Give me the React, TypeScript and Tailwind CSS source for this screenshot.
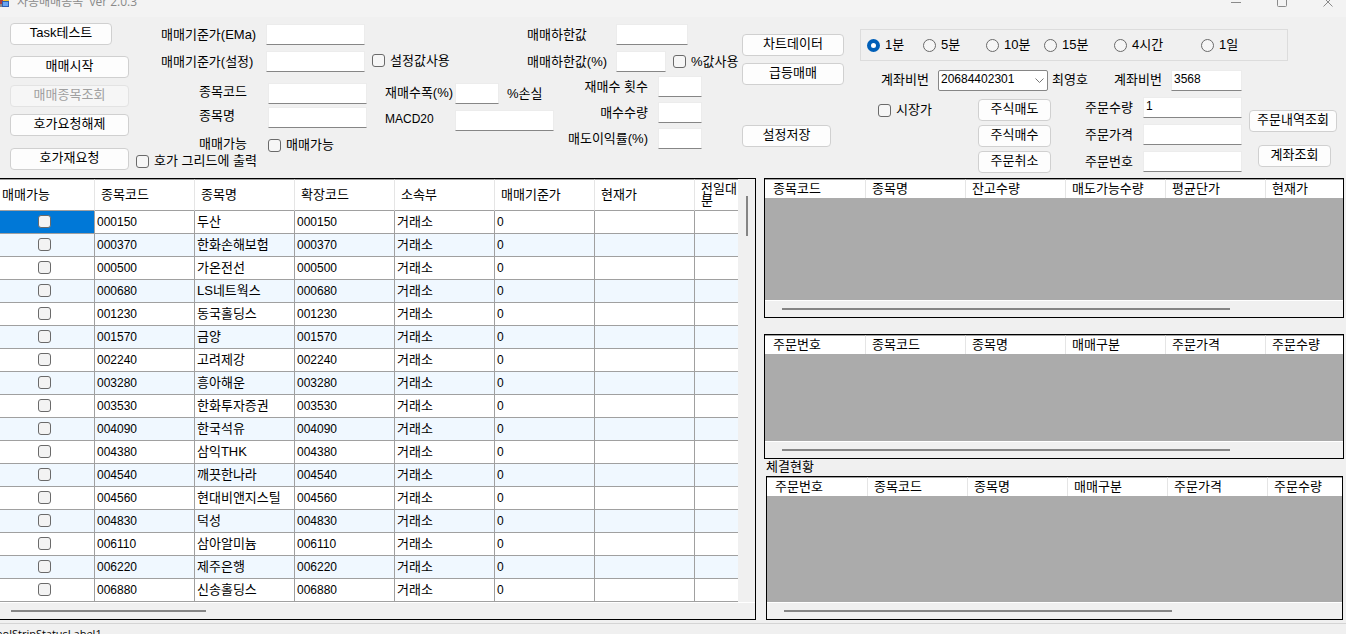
import React from 'react';
import { clsx } from 'clsx';

const stocks = [
  { code: '000150', name: '두산' },
  { code: '000370', name: '한화손해보험' },
  { code: '000500', name: '가온전선' },
  { code: '000680', name: 'LS네트웍스' },
  { code: '001230', name: '동국홀딩스' },
  { code: '001570', name: '금양' },
  { code: '002240', name: '고려제강' },
  { code: '003280', name: '흥아해운' },
  { code: '003530', name: '한화투자증권' },
  { code: '004090', name: '한국석유' },
  { code: '004380', name: '삼익THK' },
  { code: '004540', name: '깨끗한나라' },
  { code: '004560', name: '현대비앤지스틸' },
  { code: '004830', name: '덕성' },
  { code: '006110', name: '삼아알미늄' },
  { code: '006220', name: '제주은행' },
  { code: '006880', name: '신송홀딩스' },
];

const periods = [
  { label: '1분', width: 'w-14' },
  { label: '5분', width: 'w-[63px]' },
  { label: '10분', width: 'w-[58px]' },
  { label: '15분', width: 'w-[70px]' },
  { label: '4시간', width: 'w-[87px]' },
  { label: '1일', width: 'w-14' },
];

interface ButtonProps {
  children: React.ReactNode;
  className?: string;
  disabled?: boolean;
}

const Button: React.FC<ButtonProps> = ({ children, className, disabled }) => (
  <button
    type="button"
    disabled={disabled}
    className={clsx(
      'flex h-[22px] shrink-0 items-center justify-center rounded-[4px] border pb-[2px] leading-4',
      disabled ? 'border-[#e3e3e3] bg-[#f6f6f6] text-[#a0a0a0]' : 'border-[#d0d0d0] bg-[#fdfdfd]',
      className,
    )}
  >
    {children}
  </button>
);

interface TextBoxProps {
  id: string;
  className: string;
  value?: string;
}

const TextBox: React.FC<TextBoxProps> = ({ id, className, value }) => (
  <input
    id={id}
    type="text"
    defaultValue={value}
    className={clsx(
      'h-[21px] shrink-0 border border-[#ececec] border-b-[#868686] bg-white px-[2px] pb-1 text-xs leading-4 outline-none',
      className,
    )}
  />
);

const CheckBox: React.FC<{ label: string; className?: string }> = ({ label, className }) => (
  <label className={clsx('flex shrink-0 items-center gap-[5px] leading-4', className)}>
    <input type="checkbox" className="size-[13px] appearance-none rounded-[3px] border border-[#6a6a6a] bg-[#f6f6f6]" />
    {label}
  </label>
);

// Thin overlay thumb in a flat track, like the Windows 11 scroll bars
const HorizontalScroll: React.FC<{ thumb: string }> = ({ thumb }) => (
  <div className="flex h-[17px] shrink-0 items-center border-t border-white bg-[#f0f0f0]">
    <div className={clsx('h-[2px] bg-[#858585]', thumb)} />
  </div>
);

interface EmptyGridProps {
  label: string;
  columns: string[];
  thumb: string;
  className: string;
}

const EmptyGrid: React.FC<EmptyGridProps> = ({ label, columns, thumb, className }) => (
  <div className={clsx('flex min-h-0 flex-col border border-black bg-[#ababab]', className)}>
    <table aria-label={label} className="w-full table-fixed border-separate border-spacing-0 bg-white">
      <thead>
        <tr>
          {columns.map((col, i) => (
            <th
              key={col}
              className={clsx(
                'h-[19px] border-t border-t-[#a0a0a0] p-0 text-left leading-4 font-normal whitespace-nowrap',
                i === 0 ? 'w-[101px] pl-2' : 'pl-[6px]',
                i > 0 && i < columns.length - 1 && 'w-[100px]',
                i < columns.length - 1 && 'border-r border-r-[#e5e5e5]',
              )}
            >
              {col}
            </th>
          ))}
        </tr>
      </thead>
    </table>
    <div className="flex-1" />
    <HorizontalScroll thumb={thumb} />
  </div>
);

const TitleBar: React.FC = () => (
  <header className="flex h-[17px] shrink-0 items-center overflow-hidden bg-[#f3f3f3] pr-3 pb-[13px] text-[#8a8a8a]">
    <svg width="10" height="16" viewBox="0 0 10 16" className="shrink-0">
      <rect x="0" y="3" width="3" height="7" fill="#b03a3a" />
      <rect x="3" y="3" width="6" height="5" fill="#f4c430" />
      <rect x="0" y="10" width="2" height="3" fill="#8a8a8a" />
      <rect x="2.500" y="7.500" width="6" height="5" fill="#6aa5f0" stroke="#2f5fb3" />
    </svg>
    <h1 className="ml-[7px] flex-1 text-xs leading-4 whitespace-pre font-['Open_Sans','Noto_Sans_CJK_KR',sans-serif]">
      자동매매종목  ver 2.0.3
    </h1>
    <div className="flex items-center gap-[35px]">
      <button type="button" aria-label="최소화">
        <svg width="11" height="11" viewBox="0 0 11 11" stroke="#8a8a8a"><path d="M0 5.500h10" /></svg>
      </button>
      <button type="button" aria-label="최대화">
        <svg width="11" height="11" viewBox="0 0 11 11" stroke="#8a8a8a" fill="none"><rect x="0.500" y="0.500" width="9" height="9" rx="1" /></svg>
      </button>
      <button type="button" aria-label="닫기">
        <svg width="11" height="11" viewBox="0 0 11 11" stroke="#8a8a8a"><path d="M0.500 0.500l9 9M9.500 0.500l-9 9" /></svg>
      </button>
    </div>
  </header>
);

const ActionButtons: React.FC = () => (
  <div className="flex w-[119px] shrink-0 flex-col pt-[6px]">
    <Button className="w-[102px]">Task테스트</Button>
    <Button className="mt-[11px]">매매시작</Button>
    <Button className="mt-[7px]" disabled>매매종목조회</Button>
    <Button className="mt-[7px]">호가요청해제</Button>
    <Button className="mt-3">호가재요청</Button>
  </div>
);

const StockSettings: React.FC = () => (
  <div className="ml-[7px] flex w-[236px] shrink-0 flex-col pt-[7px]">
    <div className="flex items-center pl-[25px]">
      <label htmlFor="ema" className="w-[105px]">매매기준가(EMa)</label>
      <TextBox id="ema" className="w-[99px]" />
    </div>
    <div className="mt-[6px] flex items-center pl-[25px]">
      <label htmlFor="base" className="w-[105px]">매매기준가(설정)</label>
      <TextBox id="base" className="w-[99px]" />
    </div>
    <div className="mt-[11px] flex items-center pl-[63px]">
      <label htmlFor="code" className="w-[69px] pb-1">종목코드</label>
      <TextBox id="code" className="w-[99px]" />
    </div>
    <div className="mt-[3px] flex items-center pl-[63px]">
      <label htmlFor="name" className="w-[69px] pb-1">종목명</label>
      <TextBox id="name" className="w-[99px]" />
    </div>
    <div className="mt-[9px] flex h-4 items-center pl-[63px]">
      <span className="w-[69px] pb-[2px]">매매가능</span>
      <CheckBox label="매매가능" />
    </div>
    <CheckBox label="호가 그리드에 출력" />
  </div>
);

const TradeSettings: React.FC = () => (
  <div className="flex w-[370px] shrink-0 flex-col pt-[7px]">
    <div className="flex items-center pl-[155px]">
      <label htmlFor="low" className="w-[89px]">매매하한값</label>
      <TextBox id="low" className="w-[72px]" />
    </div>
    <div className="mt-[6px] flex items-center">
      <CheckBox label="설정값사용" className="w-[155px] pb-[2px]" />
      <label htmlFor="low-rate" className="w-[89px]">매매하한값(%)</label>
      <TextBox id="low-rate" className="w-[50px]" />
      <CheckBox label="%값사용" className="ml-[7px]" />
    </div>
    <div className="flex pl-[13px]">
      <div className="flex w-[170px] flex-col pt-[11px]">
        <div className="flex items-center">
          <label htmlFor="rebuy-width" className="w-[70px] pb-[2px]">재매수폭(%)</label>
          <TextBox id="rebuy-width" className="w-11" />
          <span className="ml-2">%손실</span>
        </div>
        <div className="mt-[6px] flex items-center">
          <label htmlFor="macd" className="w-[70px] pb-1 text-xs">MACD20</label>
          <TextBox id="macd" className="w-[99px]" />
        </div>
      </div>
      <div className="flex w-[147px] flex-col gap-[5px] pt-1">
        <div className="flex items-center justify-end">
          <label htmlFor="rebuy-count" className="pr-[10px]">재매수 횟수</label>
          <TextBox id="rebuy-count" className="w-11" />
        </div>
        <div className="flex items-center justify-end">
          <label htmlFor="buy-qty" className="pr-[10px]">매수수량</label>
          <TextBox id="buy-qty" className="w-11" />
        </div>
        <div className="flex items-center justify-end">
          <label htmlFor="profit" className="pr-[10px]">매도이익률(%)</label>
          <TextBox id="profit" className="w-11" />
        </div>
      </div>
    </div>
  </div>
);

const ChartButtons: React.FC = () => (
  <div className="flex w-[102px] shrink-0 flex-col items-start pt-[17px]">
    <Button className="w-full">차트데이터</Button>
    <Button className="mt-[7px] w-full">급등매매</Button>
    <Button className="mt-10 w-[89px]">설정저장</Button>
  </div>
);

const OrderPanel: React.FC = () => (
  <div className="ml-4 flex w-[478px] shrink-0 flex-col pt-3">
    <fieldset aria-label="차트 주기" className="h-8 w-[428px] border border-[#dcdcdc] pl-[6px]">
      <div className="flex h-[30px] items-center">
        {periods.map((p, i) => (
          <label key={p.label} className={clsx('flex items-center gap-[5px] leading-4', p.width)}>
            <input
              type="radio"
              name="period"
              defaultChecked={i === 0}
              className="size-[13px] appearance-none rounded-full border border-[#6a6a6a] bg-[#f6f6f6] checked:border-4 checked:border-[#005fb8] checked:bg-white"
            />
            {p.label}
          </label>
        ))}
      </div>
    </fieldset>
    <div className="mt-[9px] flex items-center pl-[21px]">
      <label htmlFor="account" className="w-[57px] pb-[2px]">계좌비번</label>
      <div className="grid">
        <select
          id="account"
          className="col-start-1 row-start-1 h-[21px] w-[110px] appearance-none rounded-[2px] border border-[#868686] bg-white px-[2px] pb-1 text-xs leading-4"
        >
          <option>20684402301</option>
        </select>
        <svg width="9" height="5" viewBox="0 0 9 5" fill="none" stroke="#777" className="pointer-events-none col-start-1 row-start-1 mr-1 self-center justify-self-end">
          <path d="M0.500 0.500l4 4l4-4" />
        </svg>
      </div>
      <span className="ml-1 w-[62px] pb-[2px]">최영호</span>
      <label htmlFor="password" className="w-[57px] pb-[2px]">계좌비번</label>
      <TextBox id="password" className="w-[71px]" value="3568" />
    </div>
    <div className="flex pl-[18px]">
      <CheckBox label="시장가" className="mt-[11px] h-4 w-[100px]" />
      <div className="flex w-[73px] flex-col gap-1 pt-2">
        <Button>주식매도</Button>
        <Button>주식매수</Button>
        <Button>주문취소</Button>
      </div>
      <div className="ml-[34px] flex flex-col gap-[6px] pt-[6px]">
        <div className="flex items-center">
          <label htmlFor="order-qty" className="w-[58px]">주문수량</label>
          <TextBox id="order-qty" className="w-[99px]" value="1" />
        </div>
        <div className="flex items-center">
          <label htmlFor="order-price" className="w-[58px]">주문가격</label>
          <TextBox id="order-price" className="w-[99px]" />
        </div>
        <div className="flex items-center">
          <label htmlFor="order-no" className="w-[58px]">주문번호</label>
          <TextBox id="order-no" className="w-[99px]" />
        </div>
      </div>
      <div className="ml-[7px] flex flex-col items-end gap-[13px] pt-[19px]">
        <Button className="w-[88px]">주문내역조회</Button>
        <Button className="mr-[6px] w-[73px]">계좌조회</Button>
      </div>
    </div>
  </div>
);

const headCell = 'h-8 border-t border-b border-t-[#a0a0a0] border-b-[#a0a0a0] py-0 pr-0 text-left leading-3 font-normal';
const bodyCell = 'h-[23px] border-r border-b border-[#a0a0a0] p-0 pl-[2px] leading-4 whitespace-nowrap';

const StockGrid: React.FC = () => (
  <div className="flex min-h-0 min-w-0 flex-col border-y border-r border-black bg-[#f0f0f0]">
    <div className="flex min-h-0 flex-1">
      <div className="min-w-0 flex-1 overflow-hidden">
        <table aria-label="종목 목록" className="w-full table-fixed border-separate border-spacing-0 bg-white">
          <thead>
            <tr>
              <th className={clsx(headCell, 'w-[95px] border-r border-r-[#e5e5e5] pl-[2px]')}>매매가능</th>
              {['종목코드', '종목명', '확장코드', '소속부', '매매기준가', '현재가'].map(col => (
                <th key={col} className={clsx(headCell, 'w-[100px] border-r border-r-[#e5e5e5] pl-[6px]')}>{col}</th>
              ))}
              <th className={clsx(headCell, 'pl-[6px]')}>전일대 분</th>
            </tr>
          </thead>
          <tbody>
            {stocks.map((s, i) => (
              <tr key={s.code} className={i % 2 ? 'bg-[#f0f8ff]' : 'bg-white'}>
                <td className={clsx('border-r border-b border-[#a0a0a0] pt-0 pr-0 pb-[2px] pl-[38px]', i === 0 && 'bg-[#0078d7]')}>
                  <input
                    type="checkbox"
                    aria-label={`${s.name} 매매가능`}
                    className="block size-[13px] appearance-none rounded-[3px] border border-[#6a6a6a] bg-[#f3f3f3]"
                  />
                </td>
                <td className={clsx(bodyCell, 'text-xs')}>{s.code}</td>
                <td className={bodyCell}>{s.name}</td>
                <td className={clsx(bodyCell, 'text-xs')}>{s.code}</td>
                <td className={bodyCell}>거래소</td>
                <td className={clsx(bodyCell, 'text-xs')}>0</td>
                <td className={bodyCell} />
                <td className="border-b border-[#a0a0a0] p-0" />
              </tr>
            ))}
          </tbody>
        </table>
      </div>
      <div className="flex w-[17px] shrink-0 justify-center pt-[17px]">
        <div className="h-10 w-[2px] bg-[#858585]" />
      </div>
    </div>
    <HorizontalScroll thumb="ml-[11px] w-[195px]" />
  </div>
);

export default function App() {
  return (
    <div className="flex h-screen flex-col overflow-hidden bg-[#f0f0f0] text-[13px] leading-4 text-black font-['Liberation_Sans','Noto_Sans_CJK_KR',sans-serif]">
      <TitleBar />
      <section className="flex h-[161px] shrink-0 pl-[10px] whitespace-nowrap">
        <ActionButtons />
        <StockSettings />
        <TradeSettings />
        <ChartButtons />
        <OrderPanel />
      </section>
      <main className="grid min-h-0 flex-1 grid-cols-[756fr_580fr] gap-2 pr-[2px]">
        <StockGrid />
        <div className="flex min-h-0 min-w-0 flex-col">
          <EmptyGrid
            label="잔고"
            columns={['종목코드', '종목명', '잔고수량', '매도가능수량', '평균단가', '현재가']}
            thumb="ml-[17px] w-[448px]"
            className="flex-[140]"
          />
          <EmptyGrid
            label="주문"
            columns={['주문번호', '종목코드', '종목명', '매매구분', '주문가격', '주문수량']}
            thumb="ml-[17px] w-[448px]"
            className="mt-4 flex-[125]"
          />
          <h2 className="h-[17px] shrink-0 pl-[2px]">체결현황</h2>
          <EmptyGrid
            label="체결현황"
            columns={['주문번호', '종목코드', '종목명', '매매구분', '주문가격', '주문수량']}
            thumb="ml-[17px] w-[388px]"
            className="mr-px ml-[2px] flex-[144]"
          />
        </div>
      </main>
      <footer className="mt-[3px] h-[11px] shrink-0 overflow-hidden border-t border-[#d4d4d4]">
        <p className="-ml-2 pt-[2px] text-[11px] leading-4 font-['Open_Sans',sans-serif]">toolStripStatusLabel1</p>
      </footer>
    </div>
  );
}
